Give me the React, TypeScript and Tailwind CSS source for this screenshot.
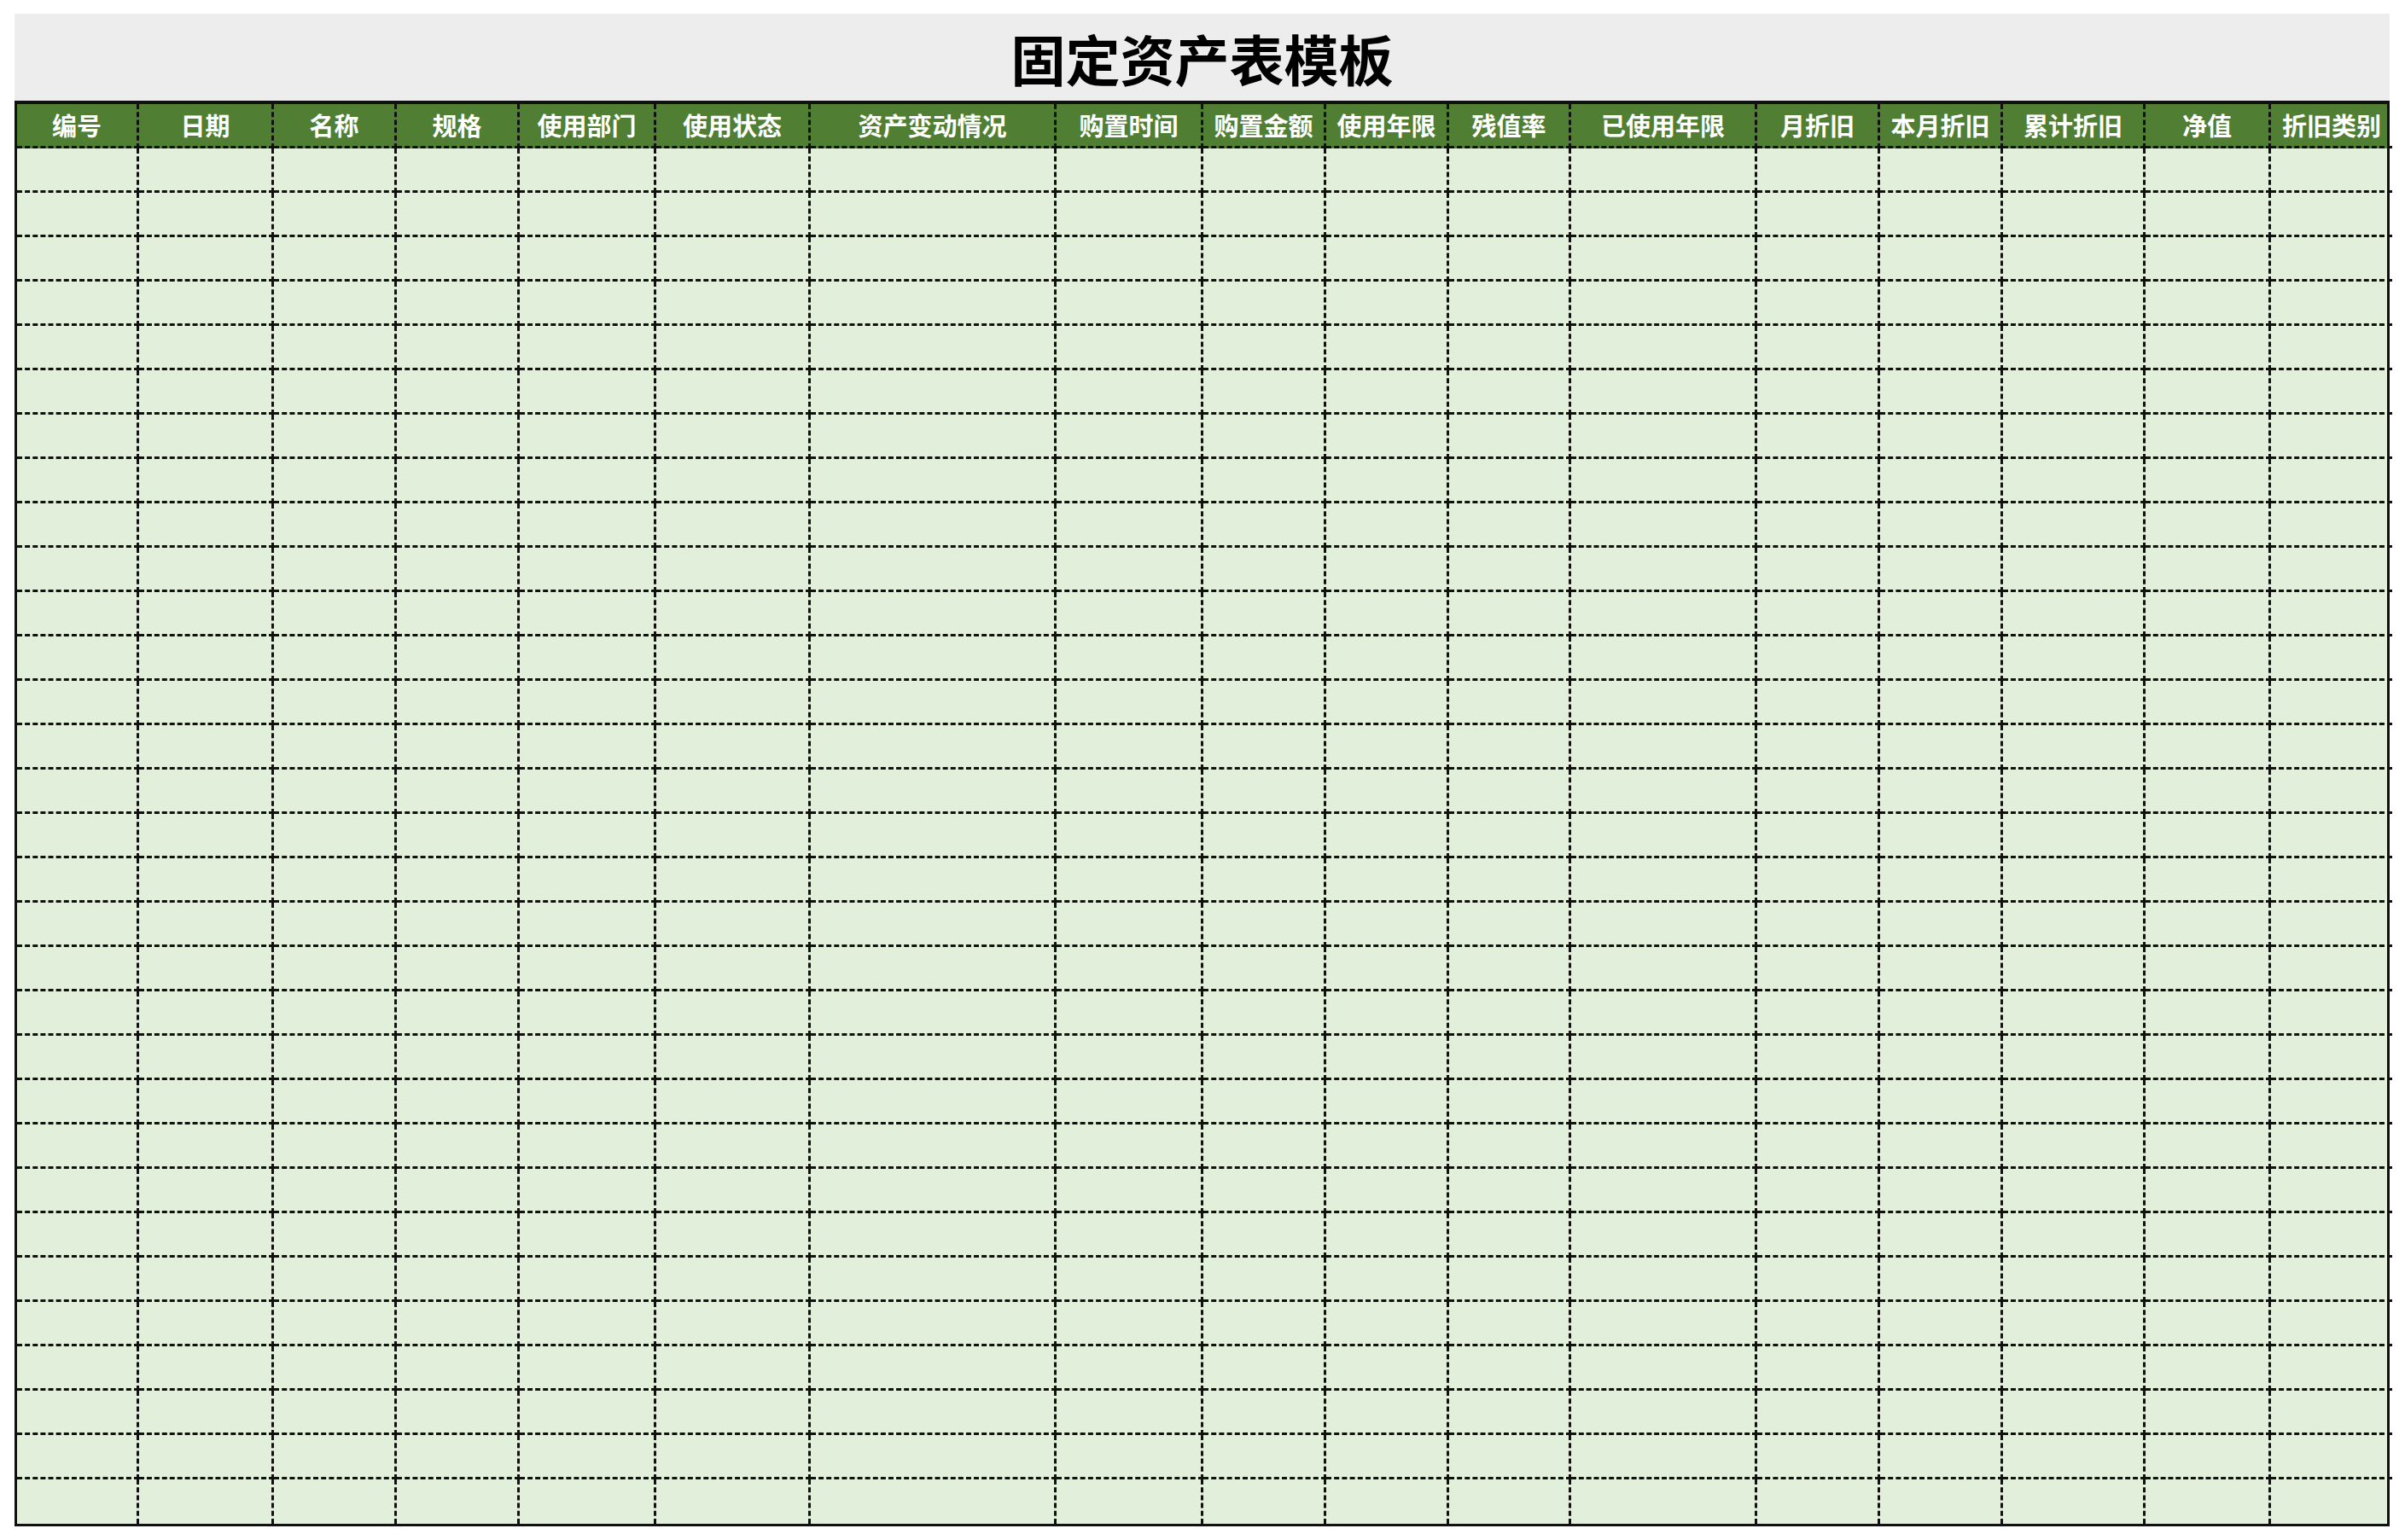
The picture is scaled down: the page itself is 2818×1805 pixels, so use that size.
const cols = ["编号","日期","名称","规格","使用部门","使用状态","资产变动情况","购置时间","购置金额","使用年限","残值率","已使用年限","月折旧","本月折旧","累计折旧","净值","折旧类别"];
const widths = [143,158,144,144,160,181,288,172,144,144,143,218,144,144,167,147,142];
const rows = Array.from({ length: 31 });

export default function App() {
  const tpl = widths.map((w) => w + "px").join(" ");
  return (
    <div className="w-[2818px] h-[1805px] bg-white pt-[16px] pl-[17px]" style={{ fontFamily: '"Noto Sans CJK SC", sans-serif' }}>
      <div className="w-[2783px] h-[102px] bg-[#ededed] flex items-center justify-center text-[64px] font-bold text-black">固定资产表模板</div>
      <div className="w-[2783px] border-t-[4px] border-x-[3px] border-b-[3px] border-[#111] bg-[#e2efda]">
        <div className="grid bg-[#507e32]" style={{ gridTemplateColumns: tpl }}>
          {cols.map((c, i) => (
            <div key={i} className={"h-[52px] flex items-center justify-center text-white font-bold text-[29px] border-b-[3px] border-dashed border-[#111] " + (i < cols.length - 1 ? "border-r-[3px]" : "")}>{c}</div>
          ))}
        </div>
        <div className="grid" style={{ gridTemplateColumns: tpl }}>
          {rows.map((_, r) =>
            cols.map((_, i) => (
              <div key={r + "-" + i} className={"h-[52px] border-dashed border-[#111] " + (i < cols.length - 1 ? "border-r-[3px] " : "") + (r < rows.length - 1 ? "border-b-[3px]" : "")} />
            ))
          )}
        </div>
      </div>
    </div>
  );
}
